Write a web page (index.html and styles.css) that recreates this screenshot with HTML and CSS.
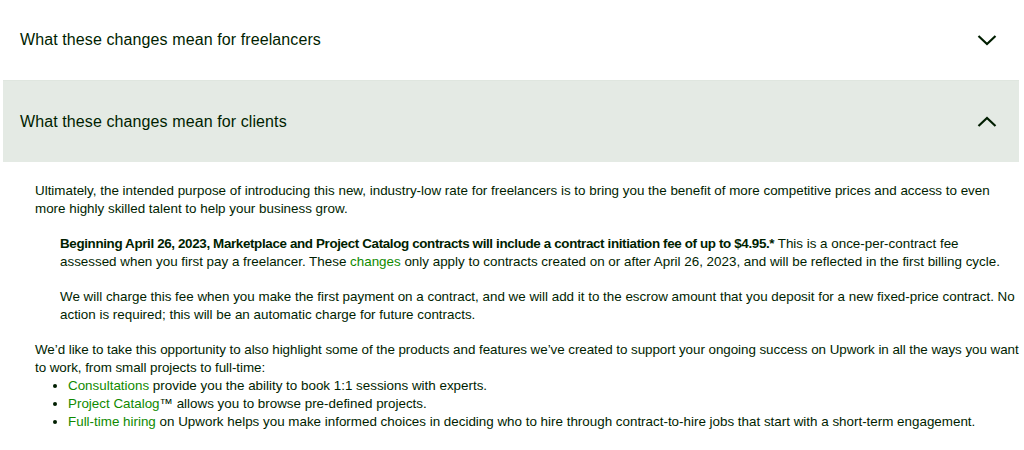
FILE: index.html
```html
<!DOCTYPE html>
<html>
<head>
<meta charset="utf-8">
<link rel="stylesheet" href="styles.css">
</head>
<body>
<div class="accordion">
  <div class="acc-head">
    <span class="acc-title">What these changes mean for freelancers</span>
    <svg class="chev" width="20" height="12" viewBox="0 0 20 12"><path d="M1.5 2 L10 10 L18.5 2" fill="none" stroke="#001e00" stroke-width="2.2"/></svg>
  </div>
  <div class="acc-head open">
    <span class="acc-title">What these changes mean for clients</span>
    <svg class="chev" width="20" height="12" viewBox="0 0 20 12"><path d="M1.5 10 L10 2 L18.5 10" fill="none" stroke="#001e00" stroke-width="2.2"/></svg>
  </div>
  <div class="acc-body">
    <p class="intro">Ultimately, the intended purpose of introducing this new, industry-low rate for freelancers is to bring you the benefit of more competitive prices and access to even more highly skilled talent to help your business grow.</p>
    <div class="indent">
      <p><strong>Beginning April 26, 2023, Marketplace and Project Catalog contracts will include a contract initiation fee of up to $4.95.*</strong> This is a once-per-contract fee assessed when you first pay a freelancer. These <a href="#">changes</a> only apply to contracts created on or after April 26, 2023, and will be reflected in the first billing cycle.</p>
      <p>We will charge this fee when you make the first payment on a contract, and we will add it to the escrow amount that you deposit for a new fixed-price contract. No action is required; this will be an automatic charge for future contracts.</p>
    </div>
    <p class="tight">We’d like to take this opportunity to also highlight some of the products and features we’ve created to support your ongoing success on Upwork in all the ways you want to work, from small projects to full-time:</p>
    <ul>
      <li><a href="#">Consultations</a> provide you the ability to book 1:1 sessions with experts.</li>
      <li><a href="#">Project Catalog</a>™ allows you to browse pre-defined projects.</li>
      <li><a href="#">Full-time hiring</a> on Upwork helps you make informed choices in deciding who to hire through contract-to-hire jobs that start with a short-term engagement.</li>
    </ul>
  </div>
</div>
</body>
</html>
```
FILE: styles.css
```css
html, body {
  margin: 0;
  padding: 0;
  background: #fff;
}
body {
  font-family: "Liberation Sans", Arial, sans-serif;
  color: #001e00;
}
.acc-head {
  height: 80px;
  margin: 0 5px 0 3px;
  display: flex;
  align-items: center;
  justify-content: space-between;
  padding: 0 22px 0 17px;
}
.acc-head.open {
  background: #e4eae4;
  border-top: 1px solid #dfe6df;
  height: 81px;
}
.acc-title {
  font-size: 16px;
  letter-spacing: 0.1px;
}
.chev {
  display: block;
}
.acc-body {
  padding: 20px 0 0 35px;
  font-size: 13.4px;
  line-height: 18px;
}
.acc-body p {
  margin: 0 0 17px 0;
}
.acc-body p.intro {
  padding-right: 6px;
}
.indent {
  padding-left: 25px;
  padding-right: 8px;
}
.acc-body p.tight {
  margin-bottom: 0;
  letter-spacing: -0.05px;
}
strong {
  font-weight: bold;
  letter-spacing: -0.36px;
}
a {
  color: #108a00;
  text-decoration: none;
}
ul {
  margin: 0;
  padding-left: 33px;
}
```
